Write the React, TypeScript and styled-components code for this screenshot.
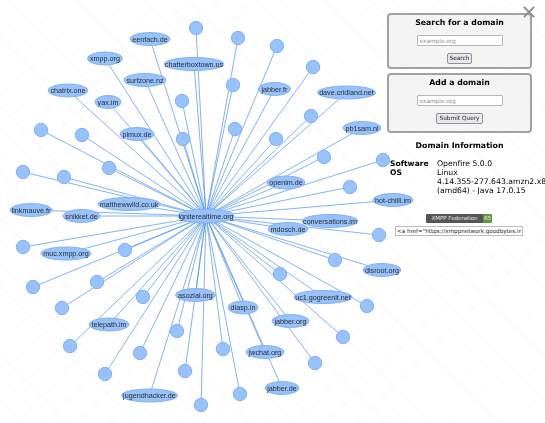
import React from "react";
import styled, { createGlobalStyle } from "styled-components";

const GlobalStyle = createGlobalStyle`
  html, body {
    margin: 0;
    padding: 0;
    background: #fff;
  }
  body {
    font-family: "DejaVu Sans", sans-serif;
    color: #000;
  }
`;

const center = { x: 206, y: 216 };

// peers without a label, the ones that never answered
const dots = [
  [196, 28], [238, 38], [277, 46], [313, 67], [233, 85], [182, 101], [311, 116], [235, 129],
  [41, 130], [82, 135], [183, 139], [276, 139], [324, 157], [383, 160], [109, 168], [23, 172],
  [64, 177], [350, 187], [379, 235], [23, 247], [125, 250], [335, 260], [280, 274], [97, 282],
  [33, 287], [143, 297], [367, 306], [62, 308], [177, 331], [343, 337], [70, 346], [223, 349],
  [140, 353], [315, 363], [185, 371], [105, 374], [240, 394], [201, 405],
];

const domains: { name: string; x: number; y: number; rx: number }[] = [
  { name: "eenfach.de", x: 150, y: 39, rx: 20 },
  { name: "xmpp.org", x: 105, y: 58.5, rx: 17.5 },
  { name: "chatterboxtown.us", x: 194, y: 64, rx: 30 },
  { name: "surfzone.nz", x: 145, y: 80, rx: 21 },
  { name: "chatrix.one", x: 68, y: 90.5, rx: 20 },
  { name: "yax.im", x: 108, y: 102, rx: 13 },
  { name: "pimux.de", x: 137, y: 134, rx: 17 },
  { name: "jabber.fr", x: 274.5, y: 89, rx: 16 },
  { name: "dave.cridland.net", x: 346.5, y: 92.5, rx: 29 },
  { name: "pb1sam.nl", x: 362, y: 128, rx: 19 },
  { name: "openim.de", x: 286, y: 182.5, rx: 19 },
  { name: "hot-chilli.im", x: 393, y: 200, rx: 20 },
  { name: "matthewwild.co.uk", x: 129, y: 204, rx: 31 },
  { name: "linkmauve.fr", x: 31, y: 210, rx: 21 },
  { name: "snikket.de", x: 81.5, y: 216, rx: 18.5 },
  { name: "conversations.im", x: 330, y: 221, rx: 28 },
  { name: "mdosch.de", x: 288, y: 229, rx: 20 },
  { name: "muc.xmpp.org", x: 66, y: 253.5, rx: 25 },
  { name: "disroot.org", x: 382, y: 270, rx: 19 },
  { name: "asozial.org", x: 195.5, y: 295, rx: 20 },
  { name: "uc1.gogreenit.net", x: 323, y: 297, rx: 29 },
  { name: "diasp.in", x: 243, y: 307.5, rx: 15 },
  { name: "jabber.org", x: 290.5, y: 321, rx: 18.5 },
  { name: "telepath.im", x: 109, y: 324.5, rx: 20 },
  { name: "jwchat.org", x: 265, y: 352, rx: 19 },
  { name: "jabber.de", x: 282, y: 388, rx: 17 },
  { name: "jugendhacker.de", x: 149.5, y: 395.5, rx: 28 },
];

const Page = styled.div`
  position: relative;
  display: flex;
  width: 545px;
  height: 423px;
  overflow: hidden;
  background-color: #fff;
  background-image:
    repeating-linear-gradient(45deg, rgba(120, 120, 120, 0.035) 0 1px, transparent 1px 16px),
    repeating-linear-gradient(-45deg, rgba(120, 120, 120, 0.025) 0 1px, transparent 1px 22px);
`;

const Graph = styled.svg`
  flex: 0 0 387px;
  height: 423px;
  overflow: visible;
  filter: blur(0.3px);
`;

const Edge = styled.line`
  stroke: #4f93f0;
  stroke-width: 1;
  stroke-opacity: 0.7;
`;

const Dot = styled.circle`
  fill: #97c2fc;
  stroke: #7fb0f5;
  stroke-width: 1;
`;

const Bubble = styled.ellipse`
  fill: #97c2fc;
  stroke: #7fb0f5;
  stroke-width: 1;
`;

const Label = styled.text`
  font-family: "Liberation Sans", Arial, sans-serif;
  font-size: 7.2px;
  fill: #2c2c2c;
  text-anchor: middle;
  dominant-baseline: central;
`;

const Side = styled.div`
  flex: 1;
  min-width: 0;
  display: flex;
  flex-direction: column;
  padding-top: 13px;
  filter: blur(0.25px);
`;

const Panel = styled.form<{ $h: number }>`
  box-sizing: border-box;
  width: 145px;
  height: ${(props) => props.$h}px;
  margin-bottom: 4px;
  padding-top: 2px;
  display: flex;
  flex-direction: column;
  align-items: center;
  background: #f4f4f4;
  border: 2px solid #a2a2a2;
  border-radius: 4px;
`;

const PanelTitle = styled.h3`
  margin: 0;
  font-size: 7.8px;
  line-height: 12px;
  font-weight: bold;
`;

const DomainInput = styled.input`
  box-sizing: border-box;
  width: 86px;
  height: 11px;
  margin-top: 6px;
  padding: 0 2px;
  font-family: "DejaVu Sans", sans-serif;
  font-size: 5.8px;
  background: #fff;
  border: 1px solid #b5b5b5;
  border-radius: 1px;
  opacity: 0.99;
  &::placeholder {
    color: #8f8f8f;
  }
`;

const SubmitButton = styled.button`
  height: 11px;
  margin-top: 7px;
  padding: 0 2px;
  font-family: "DejaVu Sans", sans-serif;
  font-size: 5.8px;
  line-height: 9px;
  color: #222;
  background: #e9e9ed;
  border: 1px solid #8f8f9d;
  border-radius: 2px;
`;

const InfoTitle = styled.h3`
  width: 145px;
  margin: 3px 0 0;
  text-align: center;
  font-size: 7.8px;
  line-height: 12px;
  font-weight: bold;
`;

const InfoGrid = styled.div`
  display: grid;
  grid-template-columns: 47px 1fr;
  margin: 7px 0 0 3px;
  font-size: 7.7px;
  line-height: 9px;
`;

const InfoKey = styled.div`
  font-weight: bold;
  font-size: 7.6px;
`;

const InfoValue = styled.div`
  white-space: nowrap;
`;

const Badge = styled.div`
  display: flex;
  align-self: flex-start;
  height: 9px;
  margin: 19px 0 0 39px;
  font-size: 5.5px;
  line-height: 9px;
  color: #e8e8e8;
  border-radius: 1px;
  overflow: hidden;
`;

const BadgeName = styled.span`
  width: 57px;
  text-align: center;
  background: #555;
`;

const BadgeScore = styled.span`
  width: 9px;
  text-align: center;
  background: #5b9a42;
`;

const EmbedCode = styled.input`
  box-sizing: border-box;
  width: 128px;
  height: 10px;
  margin: 3px 0 0 8px;
  padding: 0 1px;
  font-family: "DejaVu Sans", sans-serif;
  font-size: 5.6px;
  color: #222;
  background: #fff;
  border: 1px solid #bdbdbd;
  opacity: 0.99;
`;

const CloseIcon = styled.svg`
  position: absolute;
  top: 6px;
  right: 10px;
  width: 12px;
  height: 12px;
  stroke: #8f8f8f;
  stroke-width: 2.4;
`;

const App = () => {
  return (
    <Page>
      <GlobalStyle />
      <Graph viewBox="0 0 387 423">
        {dots.map(([x, y]) => (
          <Edge key={`e${x}-${y}`} x1={center.x} y1={center.y} x2={x} y2={y} />
        ))}
        {domains.map((d) => (
          <Edge key={`e${d.name}`} x1={center.x} y1={center.y} x2={d.x} y2={d.y} />
        ))}
        {dots.map(([x, y]) => (
          <Dot key={`d${x}-${y}`} cx={x} cy={y} r={6.7} />
        ))}
        {domains.map((d) => (
          <g key={d.name}>
            <Bubble cx={d.x} cy={d.y} rx={d.rx} ry={6.5} />
            <Label x={d.x} y={d.y}>{d.name}</Label>
          </g>
        ))}
        <Bubble cx={center.x} cy={center.y} rx={28} ry={7} />
        <Label x={center.x} y={center.y}>igniterealtime.org</Label>
      </Graph>
      <Side>
        <Panel $h={56} onSubmit={(e) => e.preventDefault()}>
          <PanelTitle>Search for a domain</PanelTitle>
          <DomainInput placeholder="example.org" />
          <SubmitButton>Search</SubmitButton>
        </Panel>
        <Panel $h={60} onSubmit={(e) => e.preventDefault()}>
          <PanelTitle>Add a domain</PanelTitle>
          <DomainInput placeholder="example.org" />
          <SubmitButton>Submit Query</SubmitButton>
        </Panel>
        <InfoTitle>Domain Information</InfoTitle>
        <InfoGrid>
          <InfoKey>Software</InfoKey>
          <InfoValue>Openfire 5.0.0</InfoValue>
          <InfoKey>OS</InfoKey>
          <InfoValue>
            Linux
            <br />
            4.14.355-277.643.amzn2.x86_64
            <br />
            (amd64) - Java 17.0.15
          </InfoValue>
        </InfoGrid>
        <Badge>
          <BadgeName>XMPP Federation</BadgeName>
          <BadgeScore>65</BadgeScore>
        </Badge>
        <EmbedCode readOnly value={'<a href="https://xmppnetwork.goodbytes.im/">'} />
      </Side>
      <CloseIcon viewBox="0 0 14 14">
        <path d="M1 1 L13 13 M13 1 L1 13" />
      </CloseIcon>
    </Page>
  );
};

export default App;
